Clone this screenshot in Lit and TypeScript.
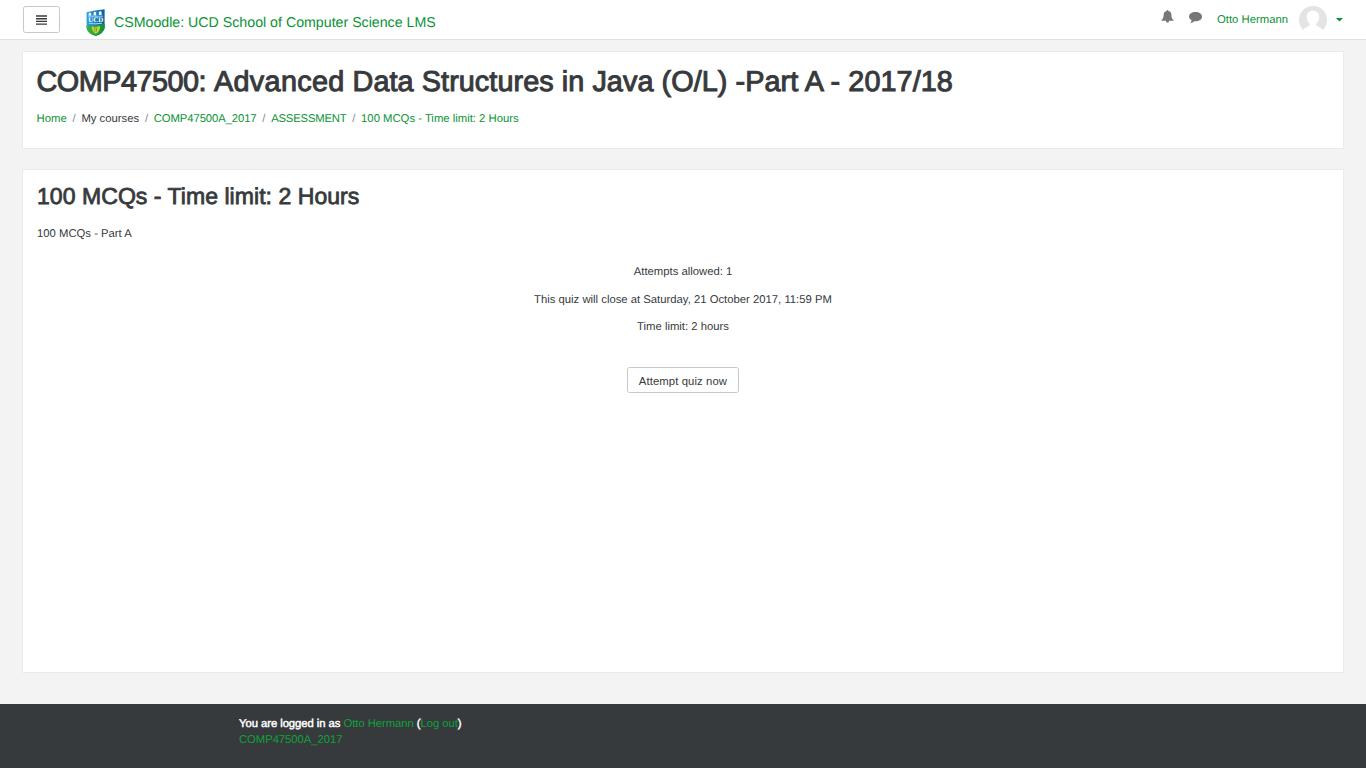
import { LitElement, html, css, svg } from "lit";
import { customElement } from "lit/decorators.js";

const crest = svg`
  <defs>
    <linearGradient id="sky" x1="0" y1="0" x2="1" y2="0">
      <stop offset="0" stop-color="#2ba3df"/><stop offset="1" stop-color="#0a5c9f"/>
    </linearGradient>
    <linearGradient id="field" x1="0" y1="0" x2="1" y2="0">
      <stop offset="0" stop-color="#3fb53a"/><stop offset="1" stop-color="#12903b"/>
    </linearGradient>
  </defs>
  <path d="M0.6 3.2Q9 1 18.6 0.2V19Q18 24 9.8 27Q1 24 0.6 19Z" fill="url(#sky)"/>
  <path d="M0.6 16.6Q10 18 18.6 14.6V19Q18 24 9.8 27Q1 24 0.6 19Z" fill="url(#field)"/>
  <path d="M2.600 6.800V4.500l1.300-1 1.300 1v2.300zM7.600 6.400V3.600l1.300-1 1.300 1v2.800zM12.800 6V3l1.400-1.100L15.600 3v3z" fill="#e8f6fc"/>
  <path d="M2 7.200h15M3 14.500q7 .7 13-.2" stroke="#a3d7ef" stroke-width="1" fill="none"/>
  <path d="M5.600 17.600Q9.800 18.600 14 17q.2 5.500-4.200 7.800Q6 23 5.600 17.600Z" fill="#c6d63a"/>
  <path d="M8.400 18.500v4M10.600 18.500v4M8.200 18.600q4 .6 1.400 4.200" stroke="#6f9f25" stroke-width=".8" fill="none"/>
  <text x="9.800" y="13.200" text-anchor="middle" class="crest-text">UCD</text>`;

@customElement("app-root")
export class AppRoot extends LitElement {
  static styles = css`
    :host {
      display: flex;
      flex-direction: column;
      height: 768px;
      overflow: hidden;
      background: #f3f3f3;
      color: #373a3c;
      font: 11.3px/17px "Liberation Sans", Arial, sans-serif;
      text-rendering: geometricPrecision;
    }
    * { box-sizing: border-box; }
    a { color: #0a9334; text-decoration: none; }
    h1, h2, p { margin: 0; }
    svg { display: block; flex: none; }
    .bar {
      display: flex;
      align-items: flex-start;
      flex: none;
      height: 40px;
      padding: 0 23px;
      background: #fff;
      border-bottom: 1px solid #e1e1e1;
    }
    .toggle {
      display: grid;
      place-items: center;
      width: 37px;
      height: 27px;
      margin-top: 6px;
      padding: 0;
      background: #fff;
      border: 1px solid #c8c8c8;
      border-radius: 2.5px;
    }
    .crest { margin: 9px 8px 0 26px; }
    .crest-text { font: bold 7px "Liberation Serif", serif; fill: #fff; }
    .brand {
      margin-top: 13px;
      font-size: 14.2px;
      line-height: 20px;
      white-space: nowrap;
    }
    .user { display: flex; margin-left: auto; }
    .bell { margin: 10px 15px 0 0; }
    .chat { margin: 12px 15px 0 0; }
    .name { margin: 12px 11px 0 0; }
    .avatar { margin: 6px 9px 0 0; }
    .caret { margin-top: 18px; }
    .card {
      flex: none;
      margin: 0 22px;
      padding: 0 14px;
      background: #fff;
      border: 1px solid #ebebeb;
    }
    .head { height: 98px; margin-top: 11px; }
    .main { height: 504px; margin-top: 20px; }
    h1 {
      margin-top: 13px;
      margin-left: -0.5px;
      font-size: 28.8px;
      font-weight: 400;
      line-height: 34px;
      letter-spacing: 0.07px;
      white-space: nowrap;
      -webkit-text-stroke: 1px #373a3c;
    }
    .code { letter-spacing: -0.5px; }
    .lead { letter-spacing: 0.3px; }
    h2 {
      margin-top: 12px;
      font-size: 23.05px;
      font-weight: 400;
      line-height: 28px;
      letter-spacing: 0.03px;
      -webkit-text-stroke: 0.8px #373a3c;
    }
    .crumbs { display: flex; gap: 5.75px; margin: 12px 0 0 -0.4px; }
    .crumbs .caps { letter-spacing: -0.2px; }
    .crumbs .id { letter-spacing: -0.1px; }
    .sep { color: #818a91; }
    .intro { margin-top: 16px; }
    .info {
      display: flex;
      flex-direction: column;
      align-items: center;
      gap: 10.6px;
      margin-top: 21px;
    }
    .attempt {
      width: 112px;
      height: 26px;
      margin-top: 20px;
      padding: 2px 0 0;
      background: #fff;
      border: 1px solid #c8c8c8;
      border-radius: 2.5px;
      color: #373a3c;
      font: inherit;
      line-height: 20px;
      letter-spacing: 0.1px;
    }
    .foot {
      flex: 1;
      margin-top: 31px;
      padding: 12px 0 0 239px;
      background: #373a3c;
      color: #fff;
      line-height: 16px;
      letter-spacing: -0.06px;
    }
    .foot a { color: #0ba33a; }
    .strong { -webkit-text-stroke: 0.45px #fff; }
  `;

  private crumbs = [
    { label: "Home", link: true, kind: "" },
    { label: "My courses", link: false, kind: "" },
    { label: "COMP47500A_2017", link: true, kind: "id" },
    { label: "ASSESSMENT", link: true, kind: "caps" },
    { label: "100 MCQs - Time limit: 2 Hours", link: true, kind: "" },
  ];

  render() {
    return html`
      <header class="bar">
        <button class="toggle" aria-label="Side panel">
          <svg width="11" height="10" viewBox="0 0 11 10"><path d="M0 1h11M0 3.7h11M0 6.4h11M0 9.1h11" stroke="#373a3c" stroke-width="1.4"/></svg>
        </button>
        <svg class="crest" width="20" height="27" viewBox="0 0 20 27">${crest}</svg>
        <a class="brand">CSMoodle: UCD School of Computer Science LMS</a>
        <div class="user">
          <svg class="bell" width="13" height="13" viewBox="0 0 13 13"><path d="M6.5 0c.6 0 .9.4.9.9 2 .4 3 1.900 3 3.900 0 2.600.7 4.300 2.100 5.300v.7H8.100Q8 12.700 6.500 12.700T4.900 10.800H.5v-.7C1.900 9.100 2.600 7.400 2.600 4.800c0-2 1-3.500 3-3.900C5.600.4 5.900 0 6.500 0Z" fill="#777"/></svg>
          <svg class="chat" width="13" height="12" viewBox="0 0 13 12"><path d="M6.500 0C10.100 0 13 2 13 4.700S10.100 9.300 6.500 9.300L5.300 9.200Q3.800 10.900 1.300 11.200Q2.500 9.900 2.600 8.300Q0 6.900 0 4.700C0 2 2.900 0 6.500 0Z" fill="#777"/></svg>
          <a class="name">Otto Hermann</a>
          <svg class="avatar" width="28" height="28" viewBox="0 0 28 28">
            <defs><clipPath id="round"><circle cx="14" cy="14" r="14"/></clipPath></defs>
            <g clip-path="url(#round)">
              <path d="M0 0h28v28H0z" fill="#e4e4e4"/>
              <path d="M14 4.800c3.900 0 6.300 2.600 6.200 6.200-.1 3-1.100 5.200-2.900 6.700v1.300c.2 1.400 5.500 2 7 5.700V28H3.700v-3.300c1.500-3.700 6.800-4.300 7-5.700v-1.300C8.900 16.200 7.900 14 7.800 11c-.1-3.600 2.300-6.200 6.200-6.200Z" fill="#fff"/>
            </g>
          </svg>
          <svg class="caret" width="7" height="4" viewBox="0 0 7 4"><path d="M0 0h7L3.500 3.500z" fill="#0a9334"/></svg>
        </div>
      </header>
      <section class="card head">
        <h1><span class="code">COMP47500:</span> <span class="lead">Advanced</span> Data Structures in Java (O/L) -Part A - 2017/18</h1>
        <nav class="crumbs">
          ${this.crumbs.map((c, i) => html`${i ? html`<span class="sep">/</span>` : ""}${c.link ? html`<a class=${c.kind}>${c.label}</a>` : html`<span>${c.label}</span>`}`)}
        </nav>
      </section>
      <main class="card main">
        <h2>100 MCQs - Time limit: 2 Hours</h2>
        <p class="intro">100 MCQs - Part A</p>
        <div class="info">
          <p>Attempts allowed: 1</p>
          <p>This quiz will close at Saturday, 21 October 2017, 11:59 PM</p>
          <p>Time limit: 2 hours</p>
          <button class="attempt">Attempt quiz now</button>
        </div>
      </main>
      <footer class="foot">
        <div><span class="strong">You are logged in as</span> <a>Otto Hermann</a> <span class="strong">(</span><a>Log out</a><span class="strong">)</span></div>
        <div><a>COMP47500A_2017</a></div>
      </footer>
    `;
  }
}
